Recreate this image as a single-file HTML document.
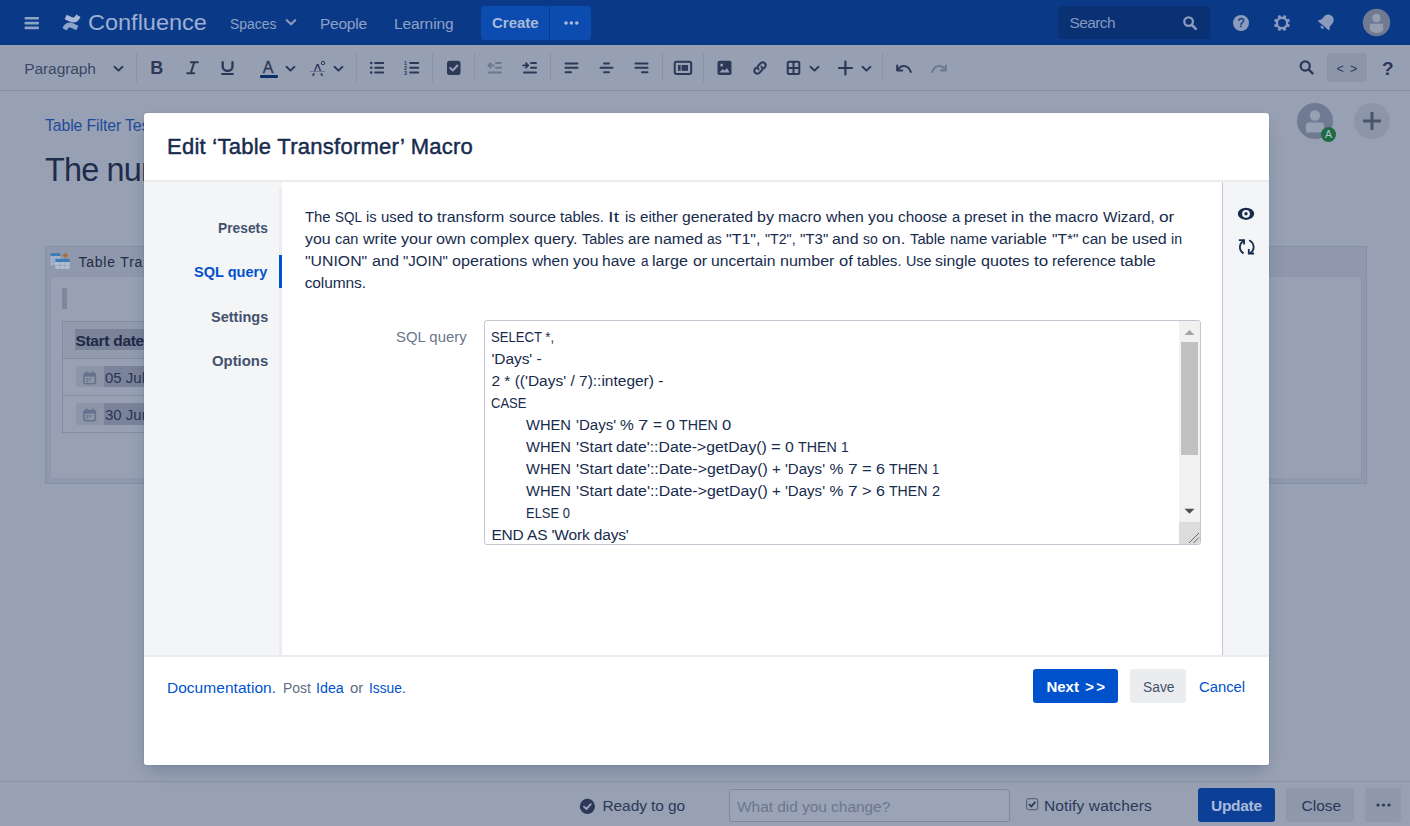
<!DOCTYPE html>
<html lang="en"><head><meta charset="utf-8"><title>Edit 'Table Transformer' Macro</title>
<style>
*{box-sizing:border-box}
html,body{margin:0;padding:0}
body{width:1410px;height:826px;overflow:hidden;position:relative;background:#98a1b3;font-family:"Liberation Sans",Arial,sans-serif;font-size:16px;color:#172b4d}
.abs{position:absolute}
.t{position:absolute;white-space:nowrap;line-height:1}
#hdr{position:absolute;left:0;top:0;width:1410px;height:45px;background:#0a3a87}
#hdr .t{color:#8fa1c7}
#tb{position:absolute;left:0;top:45px;width:1410px;height:46px;background:#97a0b2;border-bottom:1px solid #858ea1}
#tb .sep{position:absolute;top:8px;width:1px;height:29px;background:#8a93a6}
#tb svg{position:absolute}
#dlg{position:absolute;left:144px;top:113px;width:1125px;height:652px;background:#fff;border-radius:3px;box-shadow:0 8px 16px -4px rgba(9,30,66,.25),0 0 1px rgba(9,30,66,.31);overflow:hidden}
#dh{position:absolute;left:0;top:0;width:100%;height:69px;border-bottom:2px solid #ebecf0}
#nav{position:absolute;left:0;top:69px;width:138px;height:473px;background:#f4f5f7}
#navb{position:absolute;left:135px;top:75px;width:3px;height:467px;background:#ebecf0}
#side{position:absolute;left:1078px;top:69px;width:47px;height:473px;background:#f4f5f7;border-left:1px solid #c4c9d2}
#df{position:absolute;left:0;top:542px;width:100%;height:110px;border-top:2px solid #ebecf0;background:#fff}
#nav .t{font-weight:bold;color:#42526e;font-size:15px}
.w{font-size:15.5px;color:#172b4d;transform-origin:0 0}
a,.lnk{color:#0052cc;text-decoration:none}
#ta{position:absolute;left:340px;top:207px;width:717px;height:225px;border:1px solid #c1c7d0;border-radius:3px;background:#fff;overflow:hidden}
#ta .ln{position:absolute;left:6px;white-space:pre;line-height:22px;height:22px;font-size:15.2px;color:#172b4d}
#bot{position:absolute;left:0;top:781px;width:1410px;height:45px;background:#98a1b3;border-top:1px solid #8a93a6}
</style></head><body>

<!-- HEADER -->
<div id="hdr">
 <svg class="abs" style="left:24px;top:16px" width="16" height="14" viewBox="0 0 16 14"><g fill="#8ea3c9"><rect x="0.5" y="1" width="14.5" height="2.6" rx="1"/><rect x="0.5" y="5.8" width="14.5" height="2.6" rx="1"/><rect x="0.5" y="10.6" width="14.5" height="2.6" rx="1"/></g></svg>
 <svg class="abs" style="left:62px;top:13px" width="19" height="19" viewBox="0 0 19 19"><path d="M1.2 13.6c-.2.3-.4.7-.5.9-.2.3-.1.6.2.8l3.300 2c.3.2.7.1.8-.2.1-.2.3-.5.5-.9 1.300-2.100 2.600-1.900 5-.7l3.300 1.500c.3.200.7 0 .8-.3l1.600-3.500c.1-.3 0-.6-.3-.8-.7-.3-2.100-1-3.300-1.500-4.500-2.200-8.400-2.100-11.400 2.700z" fill="#8ea3c9"/><path d="M17.800 5.400c.2-.3.400-.7.500-.9.200-.3.100-.6-.2-.8l-3.300-2c-.3-.2-.7-.1-.8.200-.1.200-.3.500-.5.900-1.300 2.100-2.600 1.900-5 .7L5.200 2c-.3-.2-.7 0-.8.300L2.800 5.800c-.1.300 0 .6.300.8.700.3 2.100 1 3.300 1.500 4.500 2.200 8.400 2.100 11.400-2.700z" fill="#a9b8d6"/></svg>
 <span class="t" id="h-conf" style="left:87.500px;top:11.500px;font-size:21.800px;transform:scaleX(1.078);transform-origin:0 0;color:#9dafd2">Confluence</span>
 <span class="t" id="h-sp" style="margin-top:0.5px;left:229.500px;top:15px;font-size:15.500px;transform:scaleX(0.9);transform-origin:0 0">Spaces</span>
 <svg class="abs" style="left:285px;top:18px" width="12" height="9" viewBox="0 0 12 9"><path d="M1.800 2.200L6 6.200 10.200 2.200" fill="none" stroke="#8c9abb" stroke-width="2.200" stroke-linecap="round" stroke-linejoin="round"/></svg>
 <span class="t" id="h-pe" style="margin-top:0.5px;left:320px;top:15px;font-size:15.500px;letter-spacing:-0.25px">People</span>
 <span class="t" id="h-le" style="margin-top:0.5px;left:394px;top:15px;font-size:15.500px;letter-spacing:-0.1px">Learning</span>
 <div class="abs" style="left:481px;top:6px;width:68px;height:34px;background:#0c4cb0;border-radius:3px 0 0 3px"></div>
 <span class="t" id="h-cr" style="left:492px;top:15px;font-size:15px;font-weight:bold;color:#a9b9d8">Create</span>
 <div class="abs" style="left:550px;top:6px;width:41px;height:34px;background:#0c4cb0;border-radius:0 3px 3px 0"></div>
 <svg class="abs" style="left:562.500px;top:20px" width="17" height="6" viewBox="0 0 17 6"><g fill="#a9b9d8"><circle cx="3" cy="3" r="1.800"/><circle cx="8.400" cy="3" r="1.800"/><circle cx="13.800" cy="3" r="1.800"/></g></svg>
 <div class="abs" style="left:1058px;top:6px;width:152px;height:33px;background:#0a3174;border-radius:3px"></div>
 <span class="t" id="h-se" style="left:1069.500px;top:15px;font-size:15.500px;color:#8397c1;letter-spacing:-0.6px">Search</span>
 <svg class="abs" style="left:1181.500px;top:15px" width="17" height="17" viewBox="0 0 17 17"><circle cx="6.600" cy="6.600" r="4.300" fill="none" stroke="#8c9abb" stroke-width="2.300"/><path d="M10 10L13.800 13.800" stroke="#8c9abb" stroke-width="2.600" stroke-linecap="round"/></svg>
 <svg class="abs" style="left:1232px;top:14px" width="18" height="18" viewBox="0 0 18 18"><circle cx="9" cy="9" r="8" fill="#8c9abb"/><text x="9" y="13.300" font-family="Liberation Sans,sans-serif" font-size="12" text-anchor="middle" fill="#0a3a87" stroke="#0a3a87" stroke-width="0.300">?</text></svg>
 <svg class="abs" style="left:1271.600px;top:12.900px" width="20" height="20" viewBox="0 0 20 20"><path fill="#8c9abb" fill-rule="evenodd" d="M16.13 10.94L18.00 11.81L16.94 14.37L15.00 13.67A6.2 6.2 0 0 1 13.67 15.00L13.67 15.00L14.37 16.94L11.81 18.00L10.94 16.13A6.2 6.2 0 0 1 9.06 16.13L9.06 16.13L8.19 18.00L5.63 16.94L6.33 15.00A6.2 6.2 0 0 1 5.00 13.67L5.00 13.67L3.06 14.37L2.00 11.81L3.87 10.94A6.2 6.2 0 0 1 3.87 9.06L3.87 9.06L2.00 8.19L3.06 5.63L5.00 6.33A6.2 6.2 0 0 1 6.33 5.00L6.33 5.00L5.63 3.06L8.19 2.00L9.06 3.87A6.2 6.2 0 0 1 10.94 3.87L10.94 3.87L11.81 2.00L14.37 3.06L13.67 5.00A6.2 6.2 0 0 1 15.00 6.33L15.00 6.33L16.94 5.63L18.00 8.19L16.13 9.06A6.2 6.2 0 0 1 16.13 10.94ZM14 10a4 4 0 1 0 -8 0a4 4 0 1 0 8 0Z"/></svg>
 <svg class="abs" style="left:1315.500px;top:11.500px" width="21" height="20" viewBox="0 0 20 19"><g transform="rotate(40 10 9.500)"><path d="M10 1.800c-3.200 0-5.200 2.300-5.200 5.400v3.600l-1.600 2.300c-.3.500 0 1 .6 1h12.400c.6 0 .9-.5.600-1l-1.600-2.300V7.200c0-3.100-2-5.400-5.200-5.400z" fill="#8c9abb"/><path d="M8 15.200a2 2 0 0 0 4 0z" fill="#8c9abb"/></g></svg>
 <svg class="abs" style="left:1362px;top:8px" width="29" height="29" viewBox="0 0 29 29"><circle cx="14.500" cy="14.500" r="13.700" fill="#707b93"/><circle cx="14.400" cy="10.200" r="4.100" fill="#959eb0"/><path d="M7.800 16.700c0-.6.400-1 1-1h11.300c.6 0 1 .4 1 1v5.300c-1.800 1.900-4 3-6.600 3s-4.900-1.100-6.700-3z" fill="#959eb0"/></svg>
</div>
<!-- TOOLBAR -->
<div id="tb">
 <span class="t" id="t-par" style="left:24.300px;top:15.500px;font-size:15.500px;color:#3a4866;letter-spacing:-0.1px">Paragraph</span>
 <svg style="left:113px;top:19.5px" width="11" height="8" viewBox="0 0 11 8"><path d="M1.500 1.800L5.500 5.600 9.500 1.800" fill="none" stroke="#2b3858" stroke-width="1.900" stroke-linecap="round" stroke-linejoin="round"/></svg>
 <div class="sep" style="left:136px"></div>
 <span class="t" id="t-b" style="left:150.300px;top:14.200px;font-size:18px;font-weight:bold;color:#2b3858">B</span>
 <svg id="t-i" style="left:186px;top:15px" width="14" height="16" viewBox="0 0 14 16"><path d="M4.800 2.200h7M1.200 13.300h7M8.300 2.200L4.700 13.300" fill="none" stroke="#2b3858" stroke-width="2" stroke-linecap="round"/></svg>
 <svg id="t-u" style="left:220px;top:15px" width="15" height="12" viewBox="0 0 15 12"><path d="M2.700 2.200v4.300a4.900 4.300 0 0 0 9.800 0V2.200" fill="none" stroke="#2b3858" stroke-width="2.300" stroke-linecap="round"/></svg>
 <div class="abs" style="left:221px;top:28.300px;width:13.200px;height:2.100px;border-radius:1px;background:#2b3858"></div>
 <span class="t" id="t-a" style="left:262.700px;top:15.300px;font-size:16px;color:#2b3858;-webkit-text-stroke:0.3px #2b3858">A</span>
 <div class="abs" style="left:260px;top:30.300px;width:18px;height:2.700px;background:#0b2d6b;border-radius:1px"></div>
 <svg style="left:285px;top:19.5px" width="11" height="8" viewBox="0 0 11 8"><path d="M1.500 1.800L5.500 5.600 9.500 1.800" fill="none" stroke="#2b3858" stroke-width="1.900" stroke-linecap="round" stroke-linejoin="round"/></svg>
 <span class="t" id="t-a2" style="left:312px;top:16.500px;font-size:16.500px;color:#2b3858">A</span>
 <svg style="left:320px;top:14.500px" width="6" height="6" viewBox="0 0 6 6"><circle cx="3" cy="3" r="1.700" fill="none" stroke="#2b3858" stroke-width="1"/></svg>
 <div class="abs" style="left:309.500px;top:25.600px;width:15.600px;height:2.400px;background:#98a1b3"></div><div class="abs" style="left:309.500px;top:26.100px;width:15.600px;height:1.400px;background:#6e7890"></div>
 <svg style="left:332.5px;top:19.5px" width="11" height="8" viewBox="0 0 11 8"><path d="M1.500 1.800L5.500 5.600 9.500 1.800" fill="none" stroke="#2b3858" stroke-width="1.900" stroke-linecap="round" stroke-linejoin="round"/></svg>
 <div class="sep" style="left:356px"></div>
 <svg style="left:369px;top:15px" width="17" height="16" viewBox="0 0 17 16"><g fill="#2b3858"><circle cx="2.200" cy="3" r="1.300"/><circle cx="2.200" cy="7.800" r="1.300"/><circle cx="2.200" cy="12.600" r="1.300"/><rect x="5.200" y="2" width="10" height="2" rx="1"/><rect x="5.200" y="6.800" width="10" height="2" rx="1"/><rect x="5.200" y="11.600" width="10" height="2" rx="1"/></g></svg>
 <svg style="left:403px;top:15px" width="17" height="16" viewBox="0 0 17 16"><g fill="#2b3858"><rect x="6.200" y="2" width="10" height="2" rx="1"/><rect x="6.200" y="6.800" width="10" height="2" rx="1"/><rect x="6.200" y="11.600" width="10" height="2" rx="1"/></g><g fill="#2b3858" font-family="Liberation Sans,sans-serif" font-size="5.500" font-weight="bold"><text x="1" y="5">1</text><text x="1" y="9.800">2</text><text x="1" y="14.600">3</text></g></svg>
 <div class="sep" style="left:432px"></div>
 <svg style="left:446px;top:15px" width="16" height="16" viewBox="0 0 16 16"><rect x="1" y="0.800" width="13.500" height="14.200" rx="2.500" fill="#2b3858"/><path d="M4.200 8l2.600 2.500 4.600-5" fill="none" stroke="#98a1b3" stroke-width="2" stroke-linecap="round" stroke-linejoin="round"/></svg>
 <div class="sep" style="left:474px"></div>
 <svg style="left:487px;top:15px" width="17" height="16" viewBox="0 0 17 16"><g fill="#6c7790"><rect x="8" y="2" width="7" height="2" rx="1"/><rect x="8" y="6.800" width="7" height="2" rx="1"/><rect x="1" y="11.600" width="14" height="2" rx="1"/></g><path d="M6.500 5.400H1.500M3.600 3.200L1.400 5.400 3.600 7.600" fill="none" stroke="#6c7790" stroke-width="1.900" stroke-linecap="round" stroke-linejoin="round"/></svg>
 <svg style="left:521.500px;top:15px" width="17" height="16" viewBox="0 0 17 16"><g fill="#2b3858"><rect x="8" y="2" width="7" height="2" rx="1"/><rect x="8" y="6.800" width="7" height="2" rx="1"/><rect x="1" y="11.600" width="14" height="2" rx="1"/></g><path d="M1.200 5.400H6M4 3.200L6.200 5.400 4 7.600" fill="none" stroke="#2b3858" stroke-width="1.900" stroke-linecap="round" stroke-linejoin="round"/></svg>
 <div class="sep" style="left:550px"></div>
 <svg style="left:564px;top:15px" width="16" height="16" viewBox="0 0 16 16"><g fill="#2b3858"><rect x="0.500" y="2.400" width="14" height="2" rx="1"/><rect x="0.500" y="6.800" width="14" height="2" rx="1"/><rect x="0.500" y="11.300" width="7.500" height="2" rx="1"/></g></svg>
 <svg style="left:599px;top:15px" width="16" height="16" viewBox="0 0 16 16"><g fill="#2b3858"><rect x="4" y="2.400" width="7" height="2" rx="1"/><rect x="0.500" y="6.800" width="14" height="2" rx="1"/><rect x="4" y="11.300" width="7" height="2" rx="1"/></g></svg>
 <svg style="left:633.500px;top:15px" width="16" height="16" viewBox="0 0 16 16"><g fill="#2b3858"><rect x="0.500" y="2.400" width="14" height="2" rx="1"/><rect x="0.500" y="6.800" width="14" height="2" rx="1"/><rect x="7" y="11.300" width="7.500" height="2" rx="1"/></g></svg>
 <div class="sep" style="left:662px"></div>
 <svg style="left:673px;top:15px" width="20" height="16" viewBox="0 0 20 16"><rect x="1.700" y="1.800" width="16.500" height="12.200" rx="2" fill="none" stroke="#2b3858" stroke-width="2"/><rect x="5" y="5" width="2.600" height="5.800" fill="#2b3858"/><rect x="8.600" y="5" width="6.400" height="5.800" fill="#2b3858"/></svg>
 <div class="sep" style="left:703px"></div>
 <svg style="left:717px;top:15px" width="16" height="16" viewBox="0 0 16 16"><rect x="0.500" y="0.800" width="14" height="14.200" rx="2" fill="#2b3858"/><circle cx="4.600" cy="5" r="1.500" fill="#98a1b3"/><path d="M2.500 12.500l3.200-3.600 2 1.800 2.200-2.800 2.600 4.600z" fill="#98a1b3"/></svg>
 <svg style="left:751px;top:14px" width="18" height="18" viewBox="0 0 18 18"><g fill="none" stroke="#2b3858" stroke-width="2" stroke-linecap="round"><path d="M7.600 10.400a3 3 0 0 1 0-4.200l2.200-2.200a3 3 0 0 1 4.200 4.200l-1 1"/><path d="M10.400 7.600a3 3 0 0 1 0 4.200l-2.200 2.200a3 3 0 0 1-4.200-4.200l1-1"/></g></svg>
 <svg style="left:786px;top:15px" width="16" height="16" viewBox="0 0 16 16"><rect x="1.700" y="1.800" width="11.600" height="12.200" rx="1.500" fill="none" stroke="#2b3858" stroke-width="2"/><path d="M7.500 2v12M2 7.900h11" stroke="#2b3858" stroke-width="2"/></svg>
 <svg style="left:808.5px;top:19.5px" width="11" height="8" viewBox="0 0 11 8"><path d="M1.500 1.800L5.500 5.600 9.500 1.800" fill="none" stroke="#2b3858" stroke-width="1.900" stroke-linecap="round" stroke-linejoin="round"/></svg>
 <svg style="left:838px;top:15px" width="16" height="16" viewBox="0 0 16 16"><path d="M7.400 1.500v13M1 8h13" stroke="#2b3858" stroke-width="2.200" stroke-linecap="round"/></svg>
 <svg style="left:860.5px;top:19.5px" width="11" height="8" viewBox="0 0 11 8"><path d="M1.500 1.800L5.500 5.600 9.500 1.800" fill="none" stroke="#2b3858" stroke-width="1.900" stroke-linecap="round" stroke-linejoin="round"/></svg>
 <div class="sep" style="left:882px"></div>
 <svg style="left:895px;top:17.500px" width="18" height="13" viewBox="0 0 18 13"><path d="M2.200 2.500v5h5" fill="none" stroke="#2b3858" stroke-width="2" stroke-linecap="round" stroke-linejoin="round"/><path d="M2.800 7c2-3.200 5.200-4.400 8-3.600 2.400.7 4 2.800 5 5.600" fill="none" stroke="#2b3858" stroke-width="2" stroke-linecap="round"/></svg>
 <svg style="left:929.500px;top:17.500px" width="18" height="13" viewBox="0 0 18 13"><path d="M15.800 2.500v5h-5" fill="none" stroke="#6c7790" stroke-width="2" stroke-linecap="round" stroke-linejoin="round"/><path d="M15.200 7c-2-3.200-5.200-4.400-8-3.600-2.400.7-4 2.800-5 5.600" fill="none" stroke="#6c7790" stroke-width="2" stroke-linecap="round"/></svg>
 <svg style="left:1297.700px;top:14px" width="17" height="17" viewBox="0 0 17 17"><circle cx="7.200" cy="7" r="4.600" fill="none" stroke="#2b3858" stroke-width="2.200"/><path d="M10.800 10.600L14.600 14.400" stroke="#2b3858" stroke-width="2.300" stroke-linecap="round"/></svg>
 <div class="abs" style="left:1327px;top:8px;width:40px;height:29px;background:#8d95a9;border-radius:3px"></div>
 <span class="t" id="t-code" style="left:1336.400px;top:18px;font-size:12.500px;color:#2b3858;word-spacing:2.800px">&lt; &gt;</span>
 <span class="t" id="t-q" style="left:1382px;top:13.500px;font-size:19px;font-weight:bold;color:#2b3858">?</span>
</div>
<!-- PAGE -->
<div id="page">
 <span class="t" id="p-bc" style="left:45px;top:117.500px;font-size:15.800px;color:#1f4a9a;letter-spacing:-0.1px">Table Filter Test</span>
 <span class="t" id="p-ti" style="left:45px;top:153.600px;font-size:32.400px;color:#1f2c4c;letter-spacing:-0.8px">The number</span>
 <svg class="abs" style="left:1296px;top:102px" width="42" height="42" viewBox="0 0 42 42"><circle cx="19" cy="19" r="18" fill="#707b93"/><circle cx="19" cy="13.500" r="5.200" fill="#98a1b3"/><path d="M10 30.500v-7c0-1.700 1.300-3 3-3h12c1.700 0 3 1.300 3 3v7z" fill="#98a1b3"/><circle cx="32.500" cy="32.500" r="7.600" fill="#1e6b45"/><text x="32.500" y="36.300" font-family="Liberation Sans,sans-serif" font-size="10.500" text-anchor="middle" fill="#b9c4c9">A</text></svg>
 <svg class="abs" style="left:1354px;top:103px" width="36" height="36" viewBox="0 0 36 36"><circle cx="18" cy="18" r="18" fill="#8d95a9"/><path d="M18 9v18M9 18h18" stroke="#4a546c" stroke-width="3"/></svg>
 <div class="abs" style="left:45px;top:246px;width:1322px;height:238px;background:#8f98ac;border:1px solid #8690a5"></div>
 <div class="abs" style="left:50px;top:276px;width:1312px;height:203px;background:#98a1b3;border:1px solid #8c95a9"></div>
 <svg class="abs" style="left:50px;top:252px" width="21" height="18" viewBox="0 0 21 18"><g><rect x="0.600" y="1.200" width="9.700" height="3" fill="#3f7ab8"/><rect x="0.600" y="4.200" width="9.700" height="9" fill="#a9b7cc"/><path d="M0.600 7.200h9.700M0.600 10.200h9.700M3.800 4.200v9M7 4.200v9" stroke="#8fa0bb" stroke-width="0.700"/><rect x="5.400" y="6.900" width="14.300" height="3.200" fill="#3f7ab8"/><rect x="5.400" y="10.100" width="14.300" height="6.800" fill="#b4c0d2"/><path d="M5.400 13.400h14.300M10.200 10.100v6.800M15 10.100v6.800" stroke="#8fa0bb" stroke-width="0.700"/><path d="M15.400 0.800v5.400M12.700 3.500h5.400" stroke="#b0662a" stroke-width="1.500"/></g></svg>
 <span class="t" id="p-mt" style="left:78.400px;top:254.500px;font-size:14px;color:#222c45;letter-spacing:0.8px">Table Transformer</span>
 <div class="abs" style="left:62px;top:288px;width:5px;height:21px;background:#7e879b"></div>
 <div class="abs" style="left:62px;top:321px;width:120px;height:112px;border:1px solid #848da1;background:#98a1b3"></div>
 <div class="abs" style="left:63px;top:322px;width:119px;height:37px;background:#929bae;border-bottom:1px solid #848da1"></div>
 <div class="abs" style="left:63px;top:395px;width:119px;height:1px;background:#848da1"></div>
 <div class="abs" style="left:75px;top:329px;width:80px;height:21px;background:#7a8399"></div>
 <span class="t" id="p-sd" style="left:75.400px;top:332.800px;font-size:15.500px;font-weight:bold;color:#1e2945;letter-spacing:-0.3px">Start date</span>
 <div class="abs" style="left:76px;top:366px;width:80px;height:21px;background:#8d96a9;border-radius:3px"></div>
 <div class="abs" style="left:76px;top:403px;width:80px;height:21.500px;background:#8d96a9;border-radius:3px"></div>
 <div class="abs" style="left:104px;top:366px;width:60px;height:21px;background:#7a8399"></div>
 <div class="abs" style="left:104px;top:403px;width:60px;height:21.500px;background:#7a8399"></div>
 <svg class="abs" style="left:83px;top:370.5px" width="14" height="14" viewBox="0 0 14 14"><rect x="1" y="2.600" width="11.400" height="10.200" rx="1.600" fill="none" stroke="#66718d" stroke-width="1.600"/><rect x="1" y="2.600" width="11.400" height="3" fill="#66718d"/><path d="M3.600 0.600v2.500M9.800 0.600v2.500" stroke="#66718d" stroke-width="1.600"/><rect x="3.400" y="7.200" width="1.800" height="1.700" fill="#66718d"/><rect x="6" y="7.200" width="1.800" height="1.700" fill="#66718d"/><rect x="3.400" y="9.600" width="1.800" height="1.500" fill="#66718d"/></svg>
 <svg class="abs" style="left:83px;top:407.5px" width="14" height="14" viewBox="0 0 14 14"><rect x="1" y="2.600" width="11.400" height="10.200" rx="1.600" fill="none" stroke="#66718d" stroke-width="1.600"/><rect x="1" y="2.600" width="11.400" height="3" fill="#66718d"/><path d="M3.600 0.600v2.500M9.800 0.600v2.500" stroke="#66718d" stroke-width="1.600"/><rect x="3.400" y="7.200" width="1.800" height="1.700" fill="#66718d"/><rect x="6" y="7.200" width="1.800" height="1.700" fill="#66718d"/><rect x="3.400" y="9.600" width="1.800" height="1.500" fill="#66718d"/></svg>
 <span class="t" id="p-d1" style="left:105px;top:370px;font-size:15px;color:#2b3654">05 Jul 2021</span>
 <span class="t" id="p-d2" style="left:105px;top:407px;font-size:15px;color:#2b3654">30 Jun 2021</span>
</div>
<!-- BOTTOM -->
<div id="bot">
 <svg class="abs" style="left:579px;top:16px" width="17" height="17" viewBox="0 0 17 17"><circle cx="8.400" cy="8.400" r="7.600" fill="#2b3858"/><path d="M5 8.600l2.400 2.400 4.400-4.800" fill="none" stroke="#98a1b3" stroke-width="1.900" stroke-linecap="round" stroke-linejoin="round"/></svg>
 <span class="t" id="b-rdy" style="left:602.500px;top:15.5px;font-size:15.500px;color:#2b3858;letter-spacing:-0.1px">Ready to go</span>
 <div class="abs" style="left:729px;top:7px;width:281px;height:33px;border:1px solid #7f889c;border-radius:3px;background:#9ba4b6"></div>
 <span class="t" id="b-ph" style="left:737px;top:16.5px;font-size:15.500px;color:#6c768f;letter-spacing:-0.05px">What did you change?</span>
 <svg class="abs" style="left:1026px;top:16px" width="13" height="13" viewBox="0 0 13 13"><rect x="0.700" y="0.700" width="11" height="11" rx="2" fill="#9aa3b5" stroke="#4a546c" stroke-width="1"/><path d="M3 6.200l2.300 2.300 4-4.700" fill="none" stroke="#2b3858" stroke-width="1.800"/></svg>
 <span class="t" id="b-nw" style="left:1044px;top:16px;font-size:15.500px;color:#2b3858;letter-spacing:0.13px">Notify watchers</span>
 <div class="abs" style="left:1198px;top:6px;width:77px;height:34px;background:#0c3f96;border-radius:3px"></div>
 <span class="t" id="b-up" style="left:1211px;top:16px;font-size:15.500px;font-weight:bold;color:#a9bbdc;letter-spacing:-0.3px">Update</span>
 <div class="abs" style="left:1286px;top:6px;width:68px;height:34px;background:#8f97ab;border-radius:3px"></div>
 <span class="t" id="b-cl" style="left:1301.500px;top:16px;font-size:15.500px;color:#2b3858">Close</span>
 <div class="abs" style="left:1365px;top:6px;width:36px;height:34px;background:#8f97ab;border-radius:3px"></div>
 <svg class="abs" style="left:1375px;top:19.5px" width="17" height="6" viewBox="0 0 17 6"><g fill="#2b3858"><circle cx="3" cy="3" r="1.600"/><circle cx="8.500" cy="3" r="1.600"/><circle cx="14" cy="3" r="1.600"/></g></svg>
</div>
<!-- DIALOG -->
<div id="dlg">
 <div id="dh"><span class="t" id="d-title" style="-webkit-text-stroke:0.45px #172b4d;left:23.0px;top:23.3px;font-size:22px;font-weight:normal;color:#172b4d;letter-spacing:0.258px">Edit ‘Table Transformer’ Macro</span></div>
 <div id="nav"></div><div id="navb"></div>
 <div class="abs" style="left:135px;top:142px;width:3px;height:33px;background:#0052cc"></div>
 <span class="t" id="d-n1" style="left:73.9px;top:106.6px;font-size:15.5px;font-weight:bold;color:#42526e;transform:scaleX(0.8890);transform-origin:0 0">Presets</span><span class="t" id="d-n2" style="left:50.4px;top:151.2px;font-size:15.5px;font-weight:bold;color:#0052cc;transform:scaleX(0.9384);transform-origin:0 0">SQL query</span><span class="t" id="d-n3" style="left:66.5px;top:195.6px;font-size:15.5px;font-weight:bold;color:#42526e;transform:scaleX(0.9353);transform-origin:0 0">Settings</span><span class="t" id="d-n4" style="left:67.5px;top:240.2px;font-size:15.5px;font-weight:bold;color:#42526e;transform:scaleX(0.9597);transform-origin:0 0">Options</span>
 <div id="main">
  <span id="d-l1" class="wl"><span class="t w" style="left:161.0px;top:95.7px;transform:scaleX(0.958)">The</span> <span class="t w" style="left:190.9px;top:95.7px;transform:scaleX(0.867)">SQL</span> <span class="t w" style="left:222.1px;top:95.7px;transform:scaleX(0.946)">is</span> <span class="t w" style="left:237.0px;top:95.7px;transform:scaleX(0.964)">used</span> <span class="t w" style="left:273.7px;top:95.7px;transform:scaleX(1.159)">to</span> <span class="t w" style="left:293.0px;top:95.7px;transform:scaleX(1.028)">transform</span> <span class="t w" style="left:364.6px;top:95.7px;transform:scaleX(1.012)">source</span> <span class="t w" style="left:416.0px;top:95.7px;transform:scaleX(0.963)">tables.</span> <span class="t w" style="left:464.3px;top:95.7px;transform:scaleX(1.300)">It</span> <span class="t w" style="left:480.7px;top:95.7px;transform:scaleX(0.946)">is</span> <span class="t w" style="left:495.6px;top:95.7px;transform:scaleX(0.977)">either</span> <span class="t w" style="left:537.8px;top:95.7px;transform:scaleX(1.018)">generated</span> <span class="t w" style="left:613.2px;top:95.7px;transform:scaleX(1.032)">by</span> <span class="t w" style="left:634.4px;top:95.7px;transform:scaleX(1.007)">macro</span> <span class="t w" style="left:682.1px;top:95.7px;transform:scaleX(1.023)">when</span> <span class="t w" style="left:724.3px;top:95.7px;transform:scaleX(1.020)">you</span> <span class="t w" style="left:754.1px;top:95.7px;transform:scaleX(0.986)">choose</span> <span class="t w" style="left:807.7px;top:95.7px;transform:scaleX(0.951)">a</span> <span class="t w" style="left:820.2px;top:95.7px;transform:scaleX(0.993)">preset</span> <span class="t w" style="left:867.3px;top:95.7px;transform:scaleX(1.076)">in</span> <span class="t w" style="left:884.6px;top:95.7px;transform:scaleX(1.043)">the</span> <span class="t w" style="left:911.4px;top:95.7px;transform:scaleX(1.005)">macro</span> <span class="t w" style="left:959.0px;top:95.7px;transform:scaleX(0.986)">Wizard,</span> <span class="t w" style="left:1015.1px;top:95.7px;transform:scaleX(1.116)">or</span></span>
  <span id="d-l2" class="wl"><span class="t w" style="left:161.0px;top:117.6px;transform:scaleX(1.024)">you</span> <span class="t w" style="left:190.9px;top:117.6px;transform:scaleX(0.936)">can</span> <span class="t w" style="left:218.6px;top:117.6px;transform:scaleX(1.033)">write</span> <span class="t w" style="left:256.7px;top:117.6px;transform:scaleX(1.041)">your</span> <span class="t w" style="left:292.4px;top:117.6px;transform:scaleX(1.044)">own</span> <span class="t w" style="left:326.4px;top:117.6px;transform:scaleX(1.024)">complex</span> <span class="t w" style="left:389.8px;top:117.6px;transform:scaleX(1.037)">query.</span> <span class="t w" style="left:437.6px;top:117.6px;transform:scaleX(0.933)">Tables</span> <span class="t w" style="left:483.7px;top:117.6px;transform:scaleX(0.982)">are</span> <span class="t w" style="left:510.0px;top:117.6px;transform:scaleX(1.034)">named</span> <span class="t w" style="left:563.3px;top:117.6px;transform:scaleX(0.892)">as</span> <span class="t w" style="left:582.2px;top:117.6px;transform:scaleX(1.030)">"T1",</span> <span class="t w" style="left:620.9px;top:117.6px;transform:scaleX(0.916)">"T2",</span> <span class="t w" style="left:655.8px;top:117.6px;transform:scaleX(0.973)">"T3"</span> <span class="t w" style="left:688.4px;top:117.6px;transform:scaleX(1.024)">and</span> <span class="t w" style="left:719.2px;top:117.6px;transform:scaleX(0.904)">so</span> <span class="t w" style="left:738.3px;top:117.6px;transform:scaleX(1.085)">on.</span> <span class="t w" style="left:766.0px;top:117.6px;transform:scaleX(0.952)">Table</span> <span class="t w" style="left:805.6px;top:117.6px;transform:scaleX(0.964)">name</span> <span class="t w" style="left:847.3px;top:117.6px;transform:scaleX(1.030)">variable</span> <span class="t w" style="left:907.5px;top:117.6px;transform:scaleX(0.996)">"T*"</span> <span class="t w" style="left:938.2px;top:117.6px;transform:scaleX(0.984)">can</span> <span class="t w" style="left:967.1px;top:117.6px;transform:scaleX(0.980)">be</span> <span class="t w" style="left:988.3px;top:117.6px;transform:scaleX(1.035)">used</span> <span class="t w" style="left:1027.4px;top:117.6px;transform:scaleX(0.911)">in</span></span>
  <span id="d-l3" class="wl"><span class="t w" style="left:161.0px;top:139.5px;transform:scaleX(1.020)">"UNION"</span> <span class="t w" style="left:227.5px;top:139.5px;transform:scaleX(1.043)">and</span> <span class="t w" style="left:258.8px;top:139.5px;transform:scaleX(0.967)">"JOIN"</span> <span class="t w" style="left:307.9px;top:139.5px;transform:scaleX(1.042)">operations</span> <span class="t w" style="left:387.6px;top:139.5px;transform:scaleX(0.990)">when</span> <span class="t w" style="left:428.6px;top:139.5px;transform:scaleX(1.020)">you</span> <span class="t w" style="left:458.4px;top:139.5px;transform:scaleX(1.005)">have</span> <span class="t w" style="left:496.5px;top:139.5px;transform:scaleX(0.870)">a</span> <span class="t w" style="left:508.3px;top:139.5px;transform:scaleX(1.044)">large</span> <span class="t w" style="left:548.6px;top:139.5px;transform:scaleX(1.022)">or</span> <span class="t w" style="left:567.0px;top:139.5px;transform:scaleX(1.012)">uncertain</span> <span class="t w" style="left:635.8px;top:139.5px;transform:scaleX(1.035)">number</span> <span class="t w" style="left:694.5px;top:139.5px;transform:scaleX(1.067)">of</span> <span class="t w" style="left:712.6px;top:139.5px;transform:scaleX(0.977)">tables.</span> <span class="t w" style="left:761.5px;top:139.5px;transform:scaleX(0.925)">Use</span> <span class="t w" style="left:791.3px;top:139.5px;transform:scaleX(1.020)">single</span> <span class="t w" style="left:836.9px;top:139.5px;transform:scaleX(1.040)">quotes</span> <span class="t w" style="left:889.6px;top:139.5px;transform:scaleX(1.098)">to</span> <span class="t w" style="left:908.1px;top:139.5px;transform:scaleX(0.976)">reference</span> <span class="t w" style="left:976.3px;top:139.5px;transform:scaleX(1.065)">table</span></span>
  <span class="t" id="d-l4" style="left:160.7px;top:161.8px;font-size:15.5px;font-weight:normal;color:#172b4d;letter-spacing:-0.104px">columns.</span>
  <span class="t" id="d-lab" style="left:252.2px;top:216.1px;font-size:15.5px;font-weight:normal;color:#6b778c;transform:scaleX(0.9601);transform-origin:0 0">SQL query</span>
  <div id="ta"></div>
  <span class="t" id="d-q1" style="left:347.4px;top:215.8px;font-size:15.5px;font-weight:normal;color:#172b4d;transform:scaleX(0.8450);transform-origin:0 0">SELECT *,</span><span class="t" id="d-q2" style="left:347.4px;top:237.8px;font-size:15.5px;font-weight:normal;color:#172b4d;letter-spacing:-0.072px">'Days' -</span><span class="t" id="d-q3" style="left:347.4px;top:259.8px;font-size:15.5px;font-weight:normal;color:#172b4d;letter-spacing:-0.006px">2 * (('Days' / 7)::integer) -</span><span class="t" id="d-q4" style="left:347.4px;top:281.8px;font-size:15.5px;font-weight:normal;color:#172b4d;transform:scaleX(0.8385);transform-origin:0 0">CASE</span><span id="d-q5" class="wl"><span class="t w" style="left:382.2px;top:303.8px;transform:scaleX(0.950)">WHEN</span> <span class="t w" style="left:431.5px;top:303.8px;transform:scaleX(0.972)">'Days'</span> <span class="t w" style="left:475.9px;top:303.8px;transform:scaleX(1.000)">%</span> <span class="t w" style="left:494.0px;top:303.8px;transform:scaleX(1.194)">7</span> <span class="t w" style="left:508.6px;top:303.8px;transform:scaleX(1.004)">=</span> <span class="t w" style="left:522.0px;top:303.8px;transform:scaleX(1.032)">0</span> <span class="t w" style="left:535.2px;top:303.8px;transform:scaleX(0.917)">THEN</span> <span class="t w" style="left:578.2px;top:303.8px;transform:scaleX(1.067)">0</span></span><span id="d-q6" class="wl"><span class="t w" style="left:382.2px;top:325.8px;transform:scaleX(0.950)">WHEN</span> <span class="t w" style="left:431.5px;top:325.8px;transform:scaleX(1.017)">'Start</span> <span class="t w" style="left:472.1px;top:325.8px;transform:scaleX(1.018)">date'::Date-&gt;getDay()</span> <span class="t w" style="left:627.2px;top:325.8px;transform:scaleX(1.081)">=</span> <span class="t w" style="left:641.3px;top:325.8px;transform:scaleX(1.020)">0</span> <span class="t w" style="left:654.4px;top:325.8px;transform:scaleX(0.917)">THEN</span> <span class="t w" style="left:697.4px;top:325.8px;transform:scaleX(0.893)">1</span></span><span id="d-q7" class="wl"><span class="t w" style="left:382.2px;top:347.8px;transform:scaleX(0.950)">WHEN</span> <span class="t w" style="left:431.5px;top:347.8px;transform:scaleX(1.017)">'Start</span> <span class="t w" style="left:472.1px;top:347.8px;transform:scaleX(1.025)">date'::Date-&gt;getDay()</span> <span class="t w" style="left:628.2px;top:347.8px;transform:scaleX(0.971)">+</span> <span class="t w" style="left:641.3px;top:347.8px;transform:scaleX(0.970)">'Days'</span> <span class="t w" style="left:685.6px;top:347.8px;transform:scaleX(1.000)">%</span> <span class="t w" style="left:703.7px;top:347.8px;transform:scaleX(1.125)">7</span> <span class="t w" style="left:717.7px;top:347.8px;transform:scaleX(1.070)">=</span> <span class="t w" style="left:731.7px;top:347.8px;transform:scaleX(1.032)">6</span> <span class="t w" style="left:744.9px;top:347.8px;transform:scaleX(0.917)">THEN</span> <span class="t w" style="left:787.9px;top:347.8px;transform:scaleX(0.823)">1</span></span><span id="d-q8" class="wl"><span class="t w" style="left:382.2px;top:369.8px;transform:scaleX(0.950)">WHEN</span> <span class="t w" style="left:431.5px;top:369.8px;transform:scaleX(1.017)">'Start</span> <span class="t w" style="left:472.1px;top:369.8px;transform:scaleX(1.025)">date'::Date-&gt;getDay()</span> <span class="t w" style="left:628.2px;top:369.8px;transform:scaleX(0.971)">+</span> <span class="t w" style="left:641.3px;top:369.8px;transform:scaleX(0.970)">'Days'</span> <span class="t w" style="left:685.6px;top:369.8px;transform:scaleX(1.000)">%</span> <span class="t w" style="left:703.7px;top:369.8px;transform:scaleX(1.125)">7</span> <span class="t w" style="left:717.7px;top:369.8px;transform:scaleX(1.070)">&gt;</span> <span class="t w" style="left:731.7px;top:369.8px;transform:scaleX(1.032)">6</span> <span class="t w" style="left:744.9px;top:369.8px;transform:scaleX(0.908)">THEN</span> <span class="t w" style="left:787.5px;top:369.8px;transform:scaleX(0.939)">2</span></span><span class="t" id="d-q9" style="left:382.0px;top:391.8px;font-size:15.5px;font-weight:normal;color:#172b4d;transform:scaleX(0.8371);transform-origin:0 0">ELSE 0</span><span class="t" id="d-q10" style="left:347.4px;top:413.8px;font-size:15.5px;font-weight:normal;color:#172b4d;letter-spacing:-0.154px">END AS 'Work days'</span>
  <div class="abs" style="left:1035px;top:208px;width:21px;height:223px;background:#f1f1f1;border-radius:0 2px 2px 0"></div>
  <div class="abs" style="left:1037px;top:229px;width:17px;height:113px;background:#c1c1c1"></div>
  <svg class="abs" style="left:1040px;top:216px" width="11" height="7" viewBox="0 0 11 7"><path d="M0.500 6L5.500 1 10.500 6z" fill="#a3a3a3"/></svg>
  <svg class="abs" style="left:1040px;top:395px" width="11" height="7" viewBox="0 0 11 7"><path d="M0.500 0.800L5.500 5.800 10.500 0.800z" fill="#505050"/></svg>
  <div class="abs" style="left:1035px;top:409px;width:21px;height:22px;background:#dcdcdc;border-radius:0 0 2px 0"></div>
  <svg class="abs" style="left:1035px;top:410px" width="21" height="21" viewBox="0 0 21 21"><path d="M10 20L20 10M14.500 20L20 14.500" stroke="#6b6b6b" stroke-width="1"/></svg>
 </div>
 <div id="side">
  <svg class="abs" style="left:14px;top:25px" width="18" height="14" viewBox="0 0 18 14"><ellipse cx="9" cy="6.800" rx="8.200" ry="6.100" fill="#172b4d"/><circle cx="9" cy="6.800" r="3.900" fill="#f4f5f7"/><circle cx="9" cy="6.800" r="1.700" fill="#172b4d"/></svg>
  <svg class="abs" style="left:14px;top:56px" width="18" height="18" viewBox="0 0 18 18"><g fill="none" stroke="#172b4d" stroke-width="1.800" stroke-linejoin="miter"><path d="M7 2.800C2.300 4.800 1 11.800 6.600 15.400"/><path d="M1.800 2.200h5.300v4.300"/><path d="M12.100 2.200c5.300 2.600 6.300 9.400 1.200 13"/><path d="M17.100 15.500h-5.300v-4.500"/></g></svg>
 </div>
 <div id="df">
  <div class="abs" style="left:889px;top:12px;width:85px;height:34px;background:#0052cc;border-radius:3px"></div>
  <div class="abs" style="left:986px;top:12px;width:56px;height:34px;background:#ebecf0;border-radius:3px"></div>
 </div>
 <span class="t" id="d-f1" style="left:22.9px;top:566.7px;font-size:15.5px;font-weight:normal;color:#0052cc;letter-spacing:0.049px">Documentation.</span><span class="t" id="d-f2" style="left:138.6px;top:566.7px;font-size:15.5px;font-weight:normal;color:#5e6c84;transform:scaleX(0.8963);transform-origin:0 0">Post</span><span class="t" id="d-f3" style="left:172.4px;top:566.7px;font-size:15.5px;font-weight:normal;color:#0052cc;transform:scaleX(0.9214);transform-origin:0 0">Idea</span><span class="t" id="d-f4" style="left:206.2px;top:566.7px;font-size:15.5px;font-weight:normal;color:#5e6c84;transform:scaleX(0.9640);transform-origin:0 0">or</span><span class="t" id="d-f5" style="left:225.4px;top:566.7px;font-size:15.5px;font-weight:normal;color:#0052cc;transform:scaleX(0.8898);transform-origin:0 0">Issue.</span><span class="t" id="d-next" style="left:902.4px;top:566.2px;font-size:15px;font-weight:bold;color:#ffffff;letter-spacing:0.028px">Next</span> <span class="t" id="d-next2" style="left:941.3px;top:566.2px;font-size:15px;font-weight:bold;color:#ffffff;letter-spacing:2.169px">&gt;&gt;</span><span class="t" id="d-save" style="left:998.6px;top:565.8px;font-size:15.5px;font-weight:normal;color:#42526e;transform:scaleX(0.8912);transform-origin:0 0">Save</span><span class="t" id="d-cancel" style="left:1055.2px;top:565.8px;font-size:15.5px;font-weight:normal;color:#0052cc;transform:scaleX(0.9554);transform-origin:0 0">Cancel</span>
</div>
</body></html>
